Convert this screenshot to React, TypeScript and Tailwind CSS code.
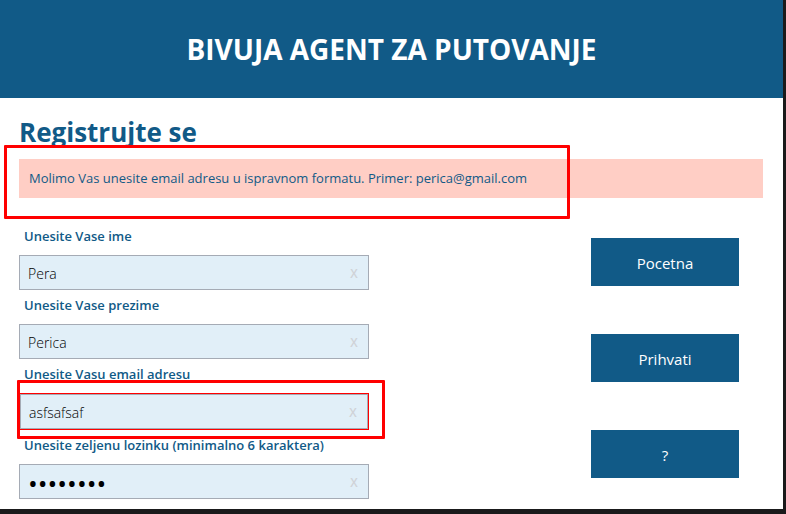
import { useState } from 'react';

type FieldProps = {
  id: string;
  label: string;
  type?: string;
  initial: string;
  invalid?: boolean;
};

function Field({ id, label, type = 'text', initial, invalid = false }: FieldProps) {
  const [value, setValue] = useState(initial);
  const secret = type === 'password';
  return (
    <div>
      <label htmlFor={id} className="flex h-[34px] items-center pb-1 pl-[5px] text-[13px] leading-5 font-semibold">
        {label}
      </label>
      <div className={invalid ? 'relative border border-[#ff0000]' : 'relative'}>
        <div className="flex h-[35px] items-center border border-[#a5abb5] bg-[#e1eff8] px-2 pt-0.5">
          <input
            id={id}
            type={type}
            value={value}
            onChange={(e) => setValue(e.target.value)}
            aria-invalid={invalid}
            className={
              secret
                ? 'min-w-0 flex-1 bg-transparent text-[26px] leading-5 text-black outline-none'
                : 'min-w-0 flex-1 bg-transparent text-[14px] leading-5 font-light text-black outline-none'
            }
          />
          <button type="button" aria-label={`X ${label}`} onClick={() => setValue('')} className="w-3 text-center text-[12px] leading-5 font-semibold text-[#d0d3d7]">
            X
          </button>
        </div>
        {invalid && <div className="pointer-events-none absolute -top-[14px] -right-[17px] -bottom-[10px] -left-[3px] rounded-[1px] border-[3px] border-[#ff0000]" />}
      </div>
    </div>
  );
}

const actions = ['Pocetna', 'Prihvati', '?'];

export default function App() {
  return (
    <div className="flex min-h-screen flex-col border-r-[3px] border-b-[5px] border-[#1a1a1b] bg-white font-['Open_Sans','Noto_Sans',sans-serif] text-[#115a87]">
      <header className="flex h-[98px] items-center justify-center bg-[#115a87]">
        <h1 className="text-[28px] leading-9 font-bold text-white">BIVUJA AGENT ZA PUTOVANJE</h1>
      </header>
      <main className="flex-1 pt-4 pr-5 pb-[10px] pl-[19px]">
        <h2 className="h-[45px] text-[26px] leading-9 font-bold">Registrujte se</h2>
        <div role="alert" className="relative bg-[#ffcec5] px-[10px] py-[9px] text-[13px] leading-[21px]">
          Molimo Vas unesite email adresu u ispravnom formatu. Primer: perica@gmail.com
          <div className="pointer-events-none absolute -top-[14px] -bottom-[21px] -left-[15px] w-[566px] rounded-[1px] border-[3px] border-[#ff0000]" />
        </div>
        <form className="mt-[23px] flex justify-between" onSubmit={(e) => e.preventDefault()}>
          <div className="w-[350px]">
            <Field id="ime" label="Unesite Vase ime" initial="Pera" />
            <Field id="prezime" label="Unesite Vase prezime" initial="Perica" />
            <Field id="email" label="Unesite Vasu email adresu" initial="asfsafsaf" invalid />
            <Field id="lozinka" label="Unesite zeljenu lozinku (minimalno 6 karaktera)" type="password" initial="lozinka1" />
          </div>
          <div className="flex flex-col gap-12 pt-[17px] pr-6">
            {actions.map((text) => (
              <button key={text} type="button" className="h-12 w-[148px] bg-[#115a87] pt-0.5 text-[15px] leading-5 text-white">
                {text}
              </button>
            ))}
          </div>
        </form>
      </main>
    </div>
  );
}
